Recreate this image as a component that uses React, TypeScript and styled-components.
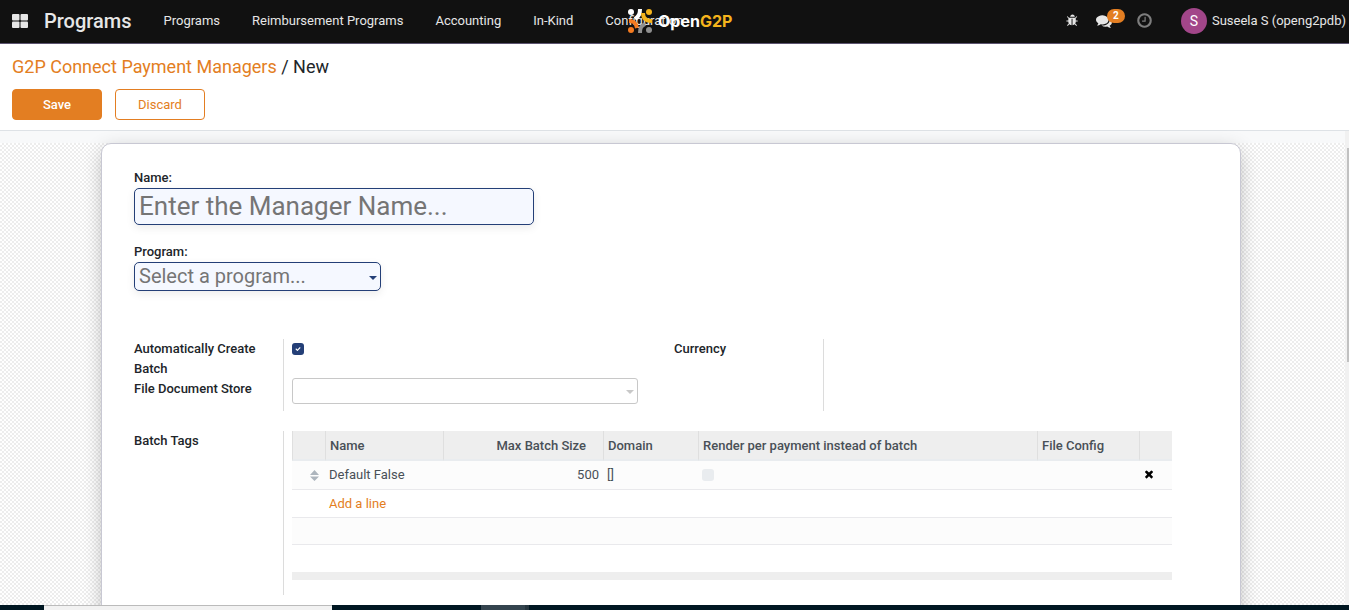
import React from 'react';
import styled, { createGlobalStyle } from 'styled-components';

const Global = createGlobalStyle`
  *, *::before, *::after { box-sizing: border-box; }
  body {
    margin: 0;
    font: 400 13px/20px Roboto, sans-serif;
    color: #212529;
    background: #fff;
  }
  button, input, select { font-family: inherit; }
`;

const Page = styled.div`
  display: flex;
  flex-direction: column;
  height: 100vh;
  overflow: hidden;
`;

const Navbar = styled.header`
  position: relative;
  flex: none;
  display: flex;
  align-items: center;
  height: 44px;
  padding: 0 3px 2px 12px;
  background: #111;
  border-bottom: 1px solid #5c5470;
  color: #e6e6e6;
`;

const AppsButton = styled.button`
  display: flex;
  padding: 0;
  border: 0;
  background: none;
  color: inherit;
`;

const Brand = styled.a`
  margin: 0 16px;
  font-size: 20px;
  font-weight: 500;
  color: inherit;
  text-decoration: none;
`;

const Menu = styled.nav`
  display: flex;
  flex: 1;
`;

const MenuLink = styled.a`
  padding: 0 16px;
  color: inherit;
  text-decoration: none;
  white-space: nowrap;
`;

const Logo = styled.div`
  position: absolute;
  top: 7px;
  left: 627px;
  display: flex;
  align-items: center;
  gap: 5px;
  font: 700 16px/28px Inter, sans-serif;
  color: #fff;
`;

const Gold = styled.span`
  color: #f5b41c;
`;

const Systray = styled.div`
  display: flex;
  align-items: center;
  white-space: nowrap;
`;

const TrayButton = styled.button<{ $dim?: boolean; $space: number }>`
  position: relative;
  display: flex;
  margin: 0 ${(p) => p.$space}px 0 0;
  padding: 0;
  border: 0;
  background: none;
  color: ${(p) => (p.$dim ? '#7d7d7d' : '#e6e6e6')};
`;

const Badge = styled.span`
  position: absolute;
  left: 11px;
  top: -4px;
  width: 18px;
  border-radius: 7px;
  background: #e37e22;
  color: #fff;
  font-size: 10px;
  line-height: 14px;
  font-weight: 700;
  text-align: center;
`;

const UserButton = styled.button`
  display: flex;
  align-items: center;
  gap: 5px;
  padding: 0;
  border: 0;
  background: none;
  color: inherit;
  font-size: 13px;
`;

const Avatar = styled.span`
  width: 26px;
  border-radius: 50%;
  background: #a24689;
  color: #fff;
  font-size: 14px;
  line-height: 26px;
`;

const ControlPanel = styled.section`
  flex: none;
  padding: 12px 12px 10px;
  border-bottom: 1px solid #dee2e6;
`;

const Breadcrumb = styled.nav`
  margin-bottom: 11px;
  font-size: 18px;
  line-height: 22px;
`;

const AccentLink = styled.a`
  color: #e37e22;
  text-decoration: none;
`;

const Actions = styled.div`
  display: flex;
  gap: 13px;
`;

const Button = styled.button<{ $primary?: boolean }>`
  width: 90px;
  height: 31px;
  border: 1px solid #e37e22;
  border-radius: 4px;
  background: ${(p) => (p.$primary ? '#e37e22' : '#fff')};
  color: ${(p) => (p.$primary ? '#fff' : '#e37e22')};
  font-size: 13px;
  font-weight: ${(p) => (p.$primary ? 500 : 400)};
`;

const Content = styled.div`
  flex: 1;
  min-height: 0;
  display: flex;
  padding-top: 12px;
  background: #f8f9fa;
`;

const FormView = styled.main`
  flex: 1;
  padding-right: 3px;
  background: repeating-conic-gradient(#ededed 0 25%, #fff 0 50%) 0 0 / 4px 4px;
`;

const Sheet = styled.form`
  max-width: 1140px;
  min-height: 600px;
  margin: 0 auto;
  padding: 24px 68px 32px 32px;
  border: 1px solid #c8c8d3;
  border-radius: 10px;
  background: #fff;
  box-shadow: 0 5px 20px -3px rgba(0, 0, 0, 0.3);
`;

const ScrollTrack = styled.div`
  flex: none;
  width: 4px;
  margin-top: -12px;
  padding: 17px 0 0 2px;
  background: #f1f1f1;
`;

const ScrollThumb = styled.div`
  height: 214px;
  background: #c1c1c1;
`;

const Label = styled.label`
  display: block;
  font-weight: 500;
`;

const NameInput = styled.input`
  display: block;
  width: 400px;
  height: 37px;
  margin-bottom: 17px;
  padding: 0 4px 2px;
  border: 1px solid #243f77;
  border-radius: 5px;
  background: #f5f8ff;
  box-shadow: 0 3px 8px rgba(0, 0, 0, 0.08);
  font-size: 26px;
  &::placeholder { color: #757575; }
`;

const SelectWrap = styled.div<{ $accent?: boolean }>`
  position: relative;
  width: ${(p) => (p.$accent ? '247px' : '100%')};
  &::after {
    content: '';
    position: absolute;
    right: 4px;
    top: 50%;
    margin-top: -1px;
    border: 4px solid transparent;
    border-top-color: ${(p) => (p.$accent ? '#243f77' : '#c8c8c8')};
    border-bottom: 0;
    pointer-events: none;
  }
`;

const Select = styled.select<{ $accent?: boolean }>`
  display: block;
  appearance: none;
  width: 100%;
  height: ${(p) => (p.$accent ? 29 : 26)}px;
  padding: 0 4px 2px;
  border: 1px solid ${(p) => (p.$accent ? '#243f77' : '#c8c8c8')};
  border-radius: ${(p) => (p.$accent ? 5 : 3)}px;
  background: ${(p) => (p.$accent ? '#f5f8ff' : '#fff')};
  box-shadow: ${(p) => (p.$accent ? '0 3px 8px rgba(0, 0, 0, 0.08)' : 'none')};
  color: #757575;
  font-size: ${(p) => (p.$accent ? 20 : 13)}px;
`;

const Groups = styled.div`
  display: grid;
  grid-template-columns: 504fr 498fr;
  gap: 36px;
  margin-top: 48px;
`;

const Group = styled.div`
  display: grid;
  grid-template-columns: 149px 1fr;
`;

const TagsGroup = styled(Group)`
  min-height: 164px;
  margin-top: 20px;
`;

const LabelCell = styled.div`
  padding-right: 20px;
`;

const FieldCell = styled.div`
  min-height: 72px;
  padding-left: 8px;
  border-left: 1px solid #dcdcdc;
`;

const CheckLine = styled.div`
  height: 39px;
  padding-top: 4px;
`;

const Checkbox = styled.input`
  appearance: none;
  display: block;
  width: 12px;
  height: 12px;
  margin: 0;
  border-radius: 3px;
  background: #e9ecef;
  &:checked { background: #243f77; }
`;

const CheckBoxHolder = styled.span`
  position: relative;
  display: block;
  width: 12px;
  svg {
    position: absolute;
    inset: 3px;
    pointer-events: none;
  }
`;

const Table = styled.table`
  width: 100%;
  table-layout: fixed;
  border-collapse: separate;
  border-spacing: 0;
  color: #495057;
`;

const Th = styled.th<{ $right?: boolean }>`
  height: 30px;
  padding: 2px ${(p) => (p.$right ? 17 : 4)}px 0 4px;
  border-left: 1px solid #dfdfdf;
  border-bottom: 2px solid #e9ecef;
  background: #eee;
  font-weight: 500;
  text-align: ${(p) => (p.$right ? 'right' : 'left')};
  white-space: nowrap;
`;

const Row = styled.tr<{ $striped?: boolean; $height: number }>`
  height: ${(p) => p.$height}px;
  background: ${(p) => (p.$striped ? '#fcfcfc' : '#fff')};
`;

const Td = styled.td<{ $align?: string; $plain?: boolean }>`
  padding: 0 4px;
  border-bottom: ${(p) => (p.$plain ? '0' : '1px solid #e9e9ec')};
  text-align: ${(p) => p.$align ?? 'left'};
`;

const Foot = styled.td`
  height: 8px;
  padding: 0;
  background: #eee;
`;

const IconButton = styled.button`
  display: block;
  padding: 0;
  border: 0;
  background: none;
  color: #000;
`;

const Handle = styled.svg`
  display: block;
  margin-left: auto;
  margin-right: 2px;
`;

const Taskbar = styled.footer`
  flex: none;
  display: flex;
  height: 5px;
  padding-left: 44px;
  background: #001722;
`;

const TaskSearch = styled.div`
  width: 288px;
  margin-right: 149px;
  border-top: 1px solid #bbb;
  background: #f2f2f2;
`;

const TaskItem = styled.div`
  width: 48px;
  border-right: 4px solid #26363f;
  background: #34444e;
`;

const paths = {
  bug: 'M1632 960q0 26-19 45t-45 19h-224q0 171-67 290l208 209q19 19 19 45t-19 45q-18 19-45 19t-45-19l-198-197q-5 5-15 13t-42 28.5-65 36.5-82 29-97 13v-896h-128v896q-51 0-101.5-13.5t-87-33-66-39-43.5-32.5l-15-14-183 207q-20 21-48 21-24 0-43-16-19-18-20.5-44.5t15.5-46.5l202-227q-58-114-58-274h-224q-26 0-45-19t-19-45 19-45 45-19h224v-294l-173-173q-19-19-19-45t19-45 45-19 45 19l173 173h844l173-173q19-19 45-19t45 19 19 45-19 45l-173 173v294h224q26 0 45 19t19 45zm-416-576h-640q0-133 93.5-226.5t226.5-93.5 226.5 93.5 93.5 226.5z',
  comments:
    'M1408 768q0 139-94 257t-256.5 186.5-353.5 68.5q-86 0-176-16-124 88-278 128-36 9-86 16h-3q-11 0-20.5-8t-11.5-21q-1-3-1-6.5t.5-6.5 2-6l2.5-5 3.5-5.5 4-5 4.5-5 4-4.5q5-6 23-25t26-29.5 22.5-29 25-38.5 20.5-44q-124-72-195-177t-71-224q0-139 94-257t256.5-186.5 353.5-68.5 353.5 68.5 256.5 186.5 94 257zm384 256q0 120-71 224.5t-195 176.5q10 24 20.5 44t25 38.5 22.5 29 26 29.5 23 25q1 1 4 4.5t4.5 5 4 5 3.5 5.5l2.5 5 2 6 .5 6.5-1 6.5q-3 14-13 22t-22 7q-50-7-86-16-154-40-278-128-90 16-176 16-271 0-472-132 58 4 88 4 161 0 309-45t264-129q125-92 192-212t67-254q0-77-23-152 129 71 204 178t75 230z',
  clock:
    'M1024 544v448q0 14-9 23t-23 9h-320q-14 0-23-9t-9-23v-64q0-14 9-23t23-9h224v-352q0-14 9-23t23-9h64q14 0 23 9t9 23zm416 352q0-148-73-273t-198-198-273-73-273 73-198 198-73 273 73 273 198 198 273 73 273-73 198-198 73-273zm224 0q0 209-103 385.5t-279.5 279.5-385.5 103-385.5-103-279.5-279.5-103-385.5 103-385.5 279.5-279.5 385.5-103 385.5 103 279.5 279.5 103 385.5z',
  times:
    'M1490 1322q0 40-28 68l-136 136q-28 28-68 28t-68-28l-294-294-294 294q-28 28-68 28t-68-28l-136-136q-28-28-28-68t28-68l294-294-294-294q-28-28-28-68t28-68l136-136q28-28 68-28t68 28l294 294 294-294q28-28 68-28t68 28l136 136q28 28 28 68t-28 68l-294 294 294 294q28 28 28 68z',
  check:
    'M1671 566q0 40-28 68l-724 724-136 136q-28 28-68 28t-68-28l-136-136-362-362q-28-28-28-68t28-68l136-136q28-28 68-28t68 28l294 295 656-657q28-28 68-28t68 28l136 136q28 28 28 68z',
};

const Icon = ({ name, size }: { name: keyof typeof paths; size: number }) => (
  <svg width={size} height={size} viewBox="0 0 1792 1792" fill="currentColor" aria-hidden="true">
    <path d={paths[name]} />
  </svg>
);

const menu = ['Programs', 'Reimbursement Programs', 'Accounting', 'In-Kind', 'Configuration'];

export default function App() {
  return (
    <Page>
      <Global />
      <Navbar>
        <AppsButton aria-label="Applications">
          <svg width="16" height="14" viewBox="0 0 16 14" fill="currentColor">
            <rect width="7.500" height="6.500" rx="1" />
            <rect x="8.500" width="7.500" height="6.500" rx="1" />
            <rect y="7.500" width="7.500" height="6.500" rx="1" />
            <rect x="8.500" y="7.500" width="7.500" height="6.500" rx="1" />
          </svg>
        </AppsButton>
        <Brand href="#">Programs</Brand>
        <Menu>
          {menu.map((m) => (
            <MenuLink key={m} href="#">{m}</MenuLink>
          ))}
        </Menu>
        <Logo>
          <svg width="26" height="26" viewBox="0 0 26 26" fill="none" aria-hidden="true">
            <circle cx="4" cy="4" r="3" fill="#fff" />
            <circle cx="22" cy="4" r="3" fill="#f5b41c" />
            <circle cx="4" cy="22" r="3" fill="#f47b20" />
            <circle cx="22" cy="22" r="3" fill="#8f8f8f" />
            <path d="M13 1c0 5-1 7-5 10" stroke="#fff" strokeWidth="4" />
            <path d="M16 5c0 5 3 8 9 8" stroke="#f5b41c" strokeWidth="4" />
            <path d="M2 13c5 0 7 2 8 7" stroke="#f47b20" strokeWidth="4" />
            <path d="M13 25c0-5 1-7 5-9" stroke="#8f8f8f" strokeWidth="4" />
          </svg>
          <span>Open<Gold>G2P</Gold></span>
        </Logo>
        <Systray>
          <TrayButton $space={17} aria-label="Debug"><Icon name="bug" size={13} /></TrayButton>
          <TrayButton $space={24} aria-label="Messages">
            <Icon name="comments" size={16} />
            <Badge>2</Badge>
          </TrayButton>
          <TrayButton $dim $space={28} aria-label="Activities"><Icon name="clock" size={17} /></TrayButton>
          <UserButton>
            <Avatar>S</Avatar>
            Suseela S (openg2pdb)
          </UserButton>
        </Systray>
      </Navbar>

      <ControlPanel>
        <Breadcrumb>
          <AccentLink href="#">G2P Connect Payment Managers</AccentLink> / New
        </Breadcrumb>
        <Actions>
          <Button $primary>Save</Button>
          <Button>Discard</Button>
        </Actions>
      </ControlPanel>

      <Content>
        <FormView>
          <Sheet>
            <Label htmlFor="name">Name:</Label>
            <NameInput id="name" placeholder="Enter the Manager Name..." />
            <Label htmlFor="program">Program:</Label>
            <SelectWrap $accent>
              <Select id="program" $accent>
                <option>Select a program...</option>
              </Select>
            </SelectWrap>

            <Groups>
              <Group>
                <LabelCell>
                  <Label htmlFor="auto">Automatically Create Batch</Label>
                  <Label htmlFor="store">File Document Store</Label>
                </LabelCell>
                <FieldCell>
                  <CheckLine>
                    <CheckBoxHolder>
                      <Checkbox id="auto" type="checkbox" defaultChecked />
                      <svg width="6" height="6" viewBox="0 0 1792 1792" fill="#fff">
                        <path d={paths.check} />
                      </svg>
                    </CheckBoxHolder>
                  </CheckLine>
                  <SelectWrap>
                    <Select id="store"><option></option></Select>
                  </SelectWrap>
                </FieldCell>
              </Group>
              <Group>
                <Label as="span">Currency</Label>
                <FieldCell />
              </Group>
            </Groups>

            <TagsGroup>
              <Label as="span">Batch Tags</Label>
              <FieldCell>
                <Table>
                  <colgroup>
                    <col style={{ width: 33 }} />
                    <col style={{ width: 118 }} />
                    <col style={{ width: 160 }} />
                    <col style={{ width: 95 }} />
                    <col />
                    <col style={{ width: 102 }} />
                    <col style={{ width: 33 }} />
                  </colgroup>
                  <thead>
                    <tr>
                      <Th />
                      <Th>Name</Th>
                      <Th $right>Max Batch Size</Th>
                      <Th>Domain</Th>
                      <Th>Render per payment instead of batch</Th>
                      <Th>File Config</Th>
                      <Th />
                    </tr>
                  </thead>
                  <tbody>
                    <Row $striped $height={29}>
                      <Td>
                        <Handle width="9" height="11" viewBox="0 0 9 11" fill="#adb5bd">
                          <path d="M0 5L4.500 0L9 5zM0 6.500L4.500 11L9 6.500z" />
                        </Handle>
                      </Td>
                      <Td>Default False</Td>
                      <Td $align="right">500</Td>
                      <Td>[]</Td>
                      <Td><Checkbox type="checkbox" disabled aria-label="Render per payment" /></Td>
                      <Td />
                      <Td>
                        <IconButton type="button" aria-label="Delete row"><Icon name="times" size={12} /></IconButton>
                      </Td>
                    </Row>
                    <Row $height={28}>
                      <Td />
                      <Td colSpan={6}><AccentLink href="#">Add a line</AccentLink></Td>
                    </Row>
                    <Row $striped $height={27}><Td colSpan={7} /></Row>
                    <Row $height={27}><Td $plain colSpan={7} /></Row>
                  </tbody>
                  <tfoot>
                    <tr><Foot colSpan={7} /></tr>
                  </tfoot>
                </Table>
              </FieldCell>
            </TagsGroup>
          </Sheet>
        </FormView>
        <ScrollTrack><ScrollThumb /></ScrollTrack>
      </Content>

      <Taskbar>
        <TaskSearch />
        <TaskItem />
      </Taskbar>
    </Page>
  );
}
